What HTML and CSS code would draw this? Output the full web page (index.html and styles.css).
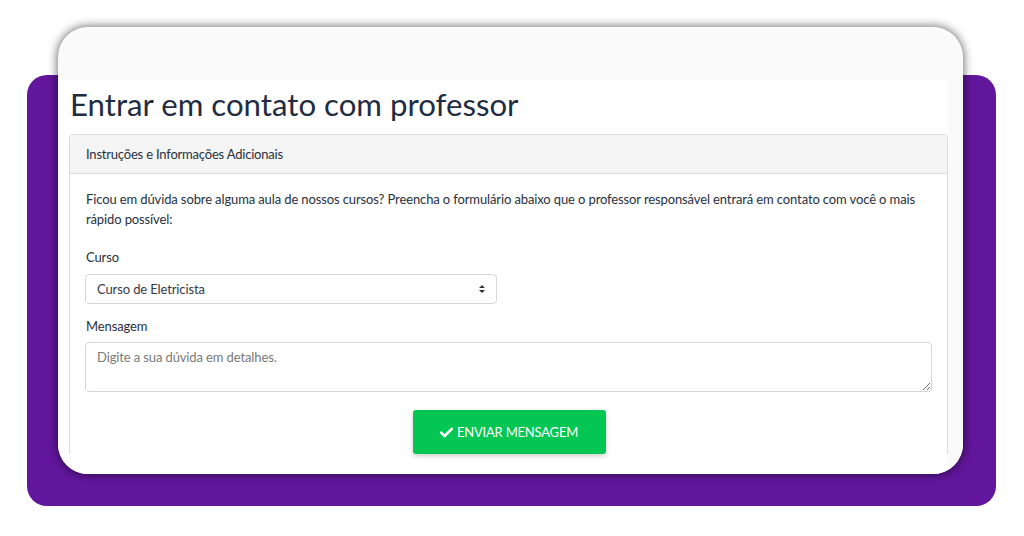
FILE: index.html
```html
<!DOCTYPE html>
<html lang="pt-BR">
<head>
<meta charset="utf-8">
<title>Entrar em contato com professor</title>
<link rel="stylesheet" href="styles.css">
</head>
<body>
<div class="stage">
  <div class="backdrop"></div>
  <div class="card">
    <div class="card-top"></div>
    <div class="card-body">
      <main class="page">
        <h1 class="title">Entrar em contato com professor</h1>
        <section class="panel">
          <div class="panel-head">Instruções e Informações Adicionais</div>
          <div class="panel-body">
            <p class="intro">Ficou em dúvida sobre alguma aula de nossos cursos? Preencha o formulário abaixo que o professor responsável entrará em contato com você o mais rápido possível:</p>
            <div class="group">
              <label class="label">Curso</label>
              <div class="select">
                <span>Curso de Eletricista</span>
                <svg class="arrows" width="8" height="10" viewBox="0 0 8 10"><path d="M1 4 L4 1 L7 4 Z M1 6 L4 9 L7 6 Z" fill="#333"/></svg>
              </div>
            </div>
            <div class="group group-msg">
              <label class="label">Mensagem</label>
              <textarea class="textarea" placeholder="Digite a sua dúvida em detalhes."></textarea>
            </div>
            <div class="actions">
              <button class="btn" type="button">
                <svg class="check" width="13" height="11" viewBox="0 0 13 11"><path d="M1.2 5.6 L4.6 9 L11.8 1.8" fill="none" stroke="#fff" stroke-width="2.6" stroke-linecap="round" stroke-linejoin="round"/></svg>
                ENVIAR MENSAGEM
              </button>
            </div>
          </div>
        </section>
      </main>
      <div class="strip"></div>
    </div>
  </div>
</div>
</body>
</html>
```

FILE: styles.css
```css
* { box-sizing: border-box; }
html, body {
  margin: 0;
  background: #ffffff;
}
body {
  width: 1024px;
  height: 536px;
  overflow: hidden;
  font-family: "Lato", "Noto Sans", sans-serif;
}
.stage {
  display: grid;
  grid-template-columns: 1024px;
  grid-template-rows: 536px;
}
.backdrop {
  grid-area: 1 / 1;
  margin: 75px 0 0 27px;
  width: 969px;
  height: 431px;
  background: #62169d;
  border-radius: 20px;
}
.card {
  grid-area: 1 / 1;
  margin: 27px 0 0 58px;
  width: 905px;
  height: 447px;
  background: #fafafa;
  border-radius: 30px;
  overflow: hidden;
  box-shadow: 0 0 10px 1px rgba(0, 0, 0, 0.55);
  display: flex;
  flex-direction: column;
}
.card-top {
  height: 53px;
  flex: none;
}
.card-body {
  flex: 1;
  display: flex;
  min-height: 0;
}
.page {
  width: 890px;
  background: #ffffff;
  padding: 0 0 0 11px;
  overflow: hidden;
}
.strip {
  flex: 1;
  background: #fafafa;
}
.title {
  margin: 0;
  padding: 4px 0 0 1px;
  height: 54px;
  font-weight: 400;
  font-size: 31.2px;
  line-height: 40px;
  color: #1f2c42;
}
.panel {
  width: 879px;
  border: 1px solid #dddddd;
  border-bottom: none;
  border-radius: 4px 4px 0 0;
  letter-spacing: -0.12px;
}
.panel-head {
  height: 39px;
  background: #f5f5f5;
  border-bottom: 1px solid #dddddd;
  padding: 0 16px;
  display: flex;
  align-items: center;
  font-size: 13px;
  color: #283040;
  letter-spacing: -0.2px;
}
.panel-body {
  padding: 15px 16px 0 16px;
  color: #283040;
  font-size: 13px;
}
.intro {
  margin: 0 0 18px;
  line-height: 20px;
}
.group {
  display: flex;
  flex-direction: column;
  align-items: flex-start;
}
.label {
  line-height: 20px;
  margin-bottom: 7px;
}
.select {
  width: 412px;
  height: 30px;
  margin-left: -1px;
  border: 1px solid #d6d6d6;
  border-radius: 4px;
  background: #fff;
  display: flex;
  align-items: center;
  justify-content: space-between;
  padding: 0 10px 0 11px;
  color: #333a48;
}
.group-msg {
  margin-top: 12px;
}
.group-msg .label {
  margin-bottom: 6px;
}
.textarea {
  width: 847px;
  height: 50px;
  margin: 0 0 0 -1px;
  border: 1px solid #d6d6d6;
  border-radius: 4px;
  padding: 6px 11px;
  font-family: inherit;
  font-size: 13px;
  letter-spacing: -0.12px;
  color: #333;
  resize: vertical;
  display: block;
}
.textarea::placeholder {
  color: #7a7a7a;
}
.actions {
  display: flex;
  justify-content: center;
  margin-top: 18px;
}
.btn {
  width: 193px;
  height: 44px;
  border: none;
  border-radius: 3px;
  background: #03c653;
  color: #ffffff;
  font-family: inherit;
  font-size: 13px;
  letter-spacing: -0.2px;
  display: flex;
  align-items: center;
  justify-content: center;
  gap: 4px;
  box-shadow: 0 2px 5px rgba(0, 0, 0, 0.2);
  margin-left: 1px;
}
```
